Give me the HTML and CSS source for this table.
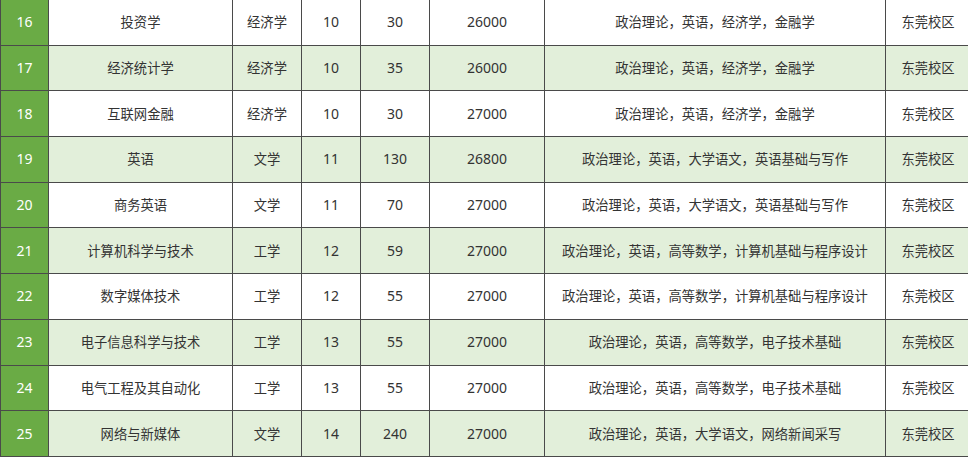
FILE: index.html
```html
<!DOCTYPE html>
<html lang="zh">
<head>
<meta charset="utf-8">
<link rel="stylesheet" href="styles.css">
</head>
<body>
<table class="grid">
<colgroup>
<col class="c-no"><col class="c-major"><col class="c-cat"><col class="c-code"><col class="c-plan"><col class="c-fee"><col class="c-subj"><col class="c-campus">
</colgroup>
<tbody>
<tr><td class="no">16</td><td>投资学</td><td>经济学</td><td class="num">10</td><td class="num">30</td><td class="num">26000</td><td>政治理论，英语，经济学，金融学</td><td>东莞校区</td></tr>
<tr class="alt"><td class="no">17</td><td>经济统计学</td><td>经济学</td><td class="num">10</td><td class="num">35</td><td class="num">26000</td><td>政治理论，英语，经济学，金融学</td><td>东莞校区</td></tr>
<tr><td class="no">18</td><td>互联网金融</td><td>经济学</td><td class="num">10</td><td class="num">30</td><td class="num">27000</td><td>政治理论，英语，经济学，金融学</td><td>东莞校区</td></tr>
<tr class="alt"><td class="no">19</td><td>英语</td><td>文学</td><td class="num">11</td><td class="num">130</td><td class="num">26800</td><td>政治理论，英语，大学语文，英语基础与写作</td><td>东莞校区</td></tr>
<tr><td class="no">20</td><td>商务英语</td><td>文学</td><td class="num">11</td><td class="num">70</td><td class="num">27000</td><td>政治理论，英语，大学语文，英语基础与写作</td><td>东莞校区</td></tr>
<tr class="alt"><td class="no">21</td><td>计算机科学与技术</td><td>工学</td><td class="num">12</td><td class="num">59</td><td class="num">27000</td><td>政治理论，英语，高等数学，计算机基础与程序设计</td><td>东莞校区</td></tr>
<tr><td class="no">22</td><td>数字媒体技术</td><td>工学</td><td class="num">12</td><td class="num">55</td><td class="num">27000</td><td>政治理论，英语，高等数学，计算机基础与程序设计</td><td>东莞校区</td></tr>
<tr class="alt"><td class="no">23</td><td>电子信息科学与技术</td><td>工学</td><td class="num">13</td><td class="num">55</td><td class="num">27000</td><td>政治理论，英语，高等数学，电子技术基础</td><td>东莞校区</td></tr>
<tr><td class="no">24</td><td>电气工程及其自动化</td><td>工学</td><td class="num">13</td><td class="num">55</td><td class="num">27000</td><td>政治理论，英语，高等数学，电子技术基础</td><td>东莞校区</td></tr>
<tr class="alt"><td class="no">25</td><td>网络与新媒体</td><td>文学</td><td class="num">14</td><td class="num">240</td><td class="num">27000</td><td>政治理论，英语，大学语文，网络新闻采写</td><td>东莞校区</td></tr>
</tbody>
</table>
</body>
</html>
```
FILE: styles.css
```css
html, body {
  margin: 0;
  padding: 0;
  background: #ffffff;
  overflow: hidden;
}
.grid {
  border-collapse: collapse;
  table-layout: fixed;
  width: 970px;
  margin-top: -1px;
  font-family: "Noto Sans CJK SC", "Noto Sans", sans-serif;
  font-size: 13.3px;
  color: #333333;
}
.c-no { width: 48px; }
.c-major { width: 184px; }
.c-cat { width: 69px; }
.c-code { width: 59px; }
.c-plan { width: 69px; }
.c-fee { width: 115px; }
.c-subj { width: 341px; }
.c-campus { width: 85px; }
.grid tr { height: 45.7px; }
.grid td {
  border: 1px solid #4a4a4a;
  text-align: center;
  vertical-align: middle;
  padding: 0;
  white-space: nowrap;
  background: #ffffff;
  line-height: 18px;
}
.grid tr.alt td { background: #e2efda; }
.grid td.num {
  font-family: "Noto Sans", sans-serif;
  font-size: 14px;
}
.grid td.no, .grid tr.alt td.no {
  background: #6aab45;
  color: #ffffff;
  font-family: "Noto Sans", sans-serif;
  font-size: 14px;
}
```
